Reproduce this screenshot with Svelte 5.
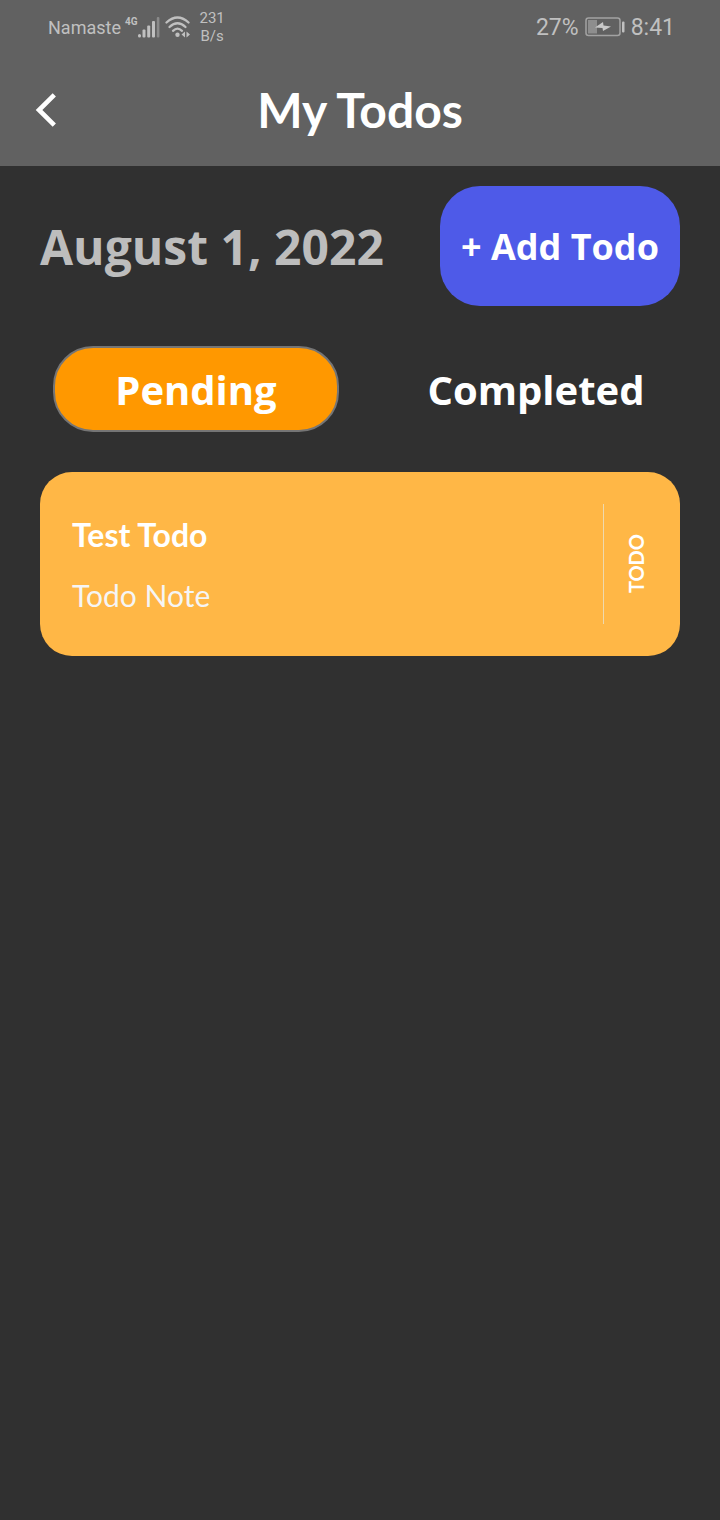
<script>
  let tab = $state('pending');
  const date = 'August 1, 2022';
  const todos = [
    { title: 'Test Todo', note: 'Todo Note', state: 'TODO', done: false }
  ];
  let visible = $derived(todos.filter((t) => t.done === (tab === 'completed')));
</script>

<div class="screen">
  <header>
    <div class="status">
      <div class="group">
        <span class="carrier">Namaste</span>
        <span class="net">4G</span>
        <svg class="signal" width="22" height="22" viewBox="0 0 22 22" aria-hidden="true">
          <g fill="#c0c0c0">
            <rect x="0" y="18" width="3" height="3.500" rx="1.500" />
            <rect x="4.500" y="13.500" width="3" height="8" rx="1" />
            <rect x="9.200" y="9.500" width="3" height="12" rx="1" />
            <rect x="14" y="5" width="3" height="16.500" rx="1" />
          </g>
          <rect x="18.800" y="1" width="2.600" height="20.500" rx="1" fill="#8a8a8a" />
        </svg>
        <svg class="wifi" width="26" height="22" viewBox="0 0 26 22" aria-hidden="true">
          <g fill="none" stroke="#c0c0c0" stroke-width="2.300" stroke-linecap="round">
            <path d="M1.500 6.500Q12.500-3.500 23.500 6.500" />
            <path d="M4.500 11Q12.500 3.500 20.500 11" />
            <path d="M8 14.800Q12.500 10.500 17 14.800" />
          </g>
          <circle cx="12.500" cy="18.800" r="2.200" fill="#c0c0c0" />
          <path d="M20 15.500V21.500L16.500 18.500ZM21.500 15.500V21.500L25 18.500Z" fill="#c0c0c0" />
        </svg>
        <span class="speed">231<br />B/s</span>
      </div>
      <div class="group right">
        <span>27%</span>
        <svg width="40" height="20" viewBox="0 0 40 20" aria-hidden="true">
          <rect x="1" y="1" width="34" height="17.500" rx="2.500" fill="none" stroke="#a2a2a2" stroke-width="1.500" />
          <rect x="3" y="3" width="9" height="13.500" fill="#8e8e8e" />
          <path d="M10 10.500L18 5L18.500 8.500L26 9.500L18 14L17.500 11Z" fill="#c8c8c8" />
          <rect x="37" y="4.500" width="2.500" height="11" rx="1" fill="#c0c0c0" />
        </svg>
        <span>8:41</span>
      </div>
    </div>
    <div class="bar">
      <button class="back" aria-label="Back">
        <svg width="22" height="36" viewBox="0 0 22 36" aria-hidden="true">
          <path d="M19.300 2.800L4 18L19.300 33.200" fill="none" stroke="#fff" stroke-width="4.600" />
        </svg>
      </button>
      <h1>My Todos</h1>
    </div>
  </header>

  <main>
    <div class="top">
      <h2>{date}</h2>
      <button class="add">+ Add Todo</button>
    </div>

    <div class="tabs">
      <button class:active={tab === 'pending'} onclick={() => (tab = 'pending')}>Pending</button>
      <button class:active={tab === 'completed'} onclick={() => (tab = 'completed')}>Completed</button>
    </div>

    <div class="list">
      {#each visible as todo}
        <article>
          <div class="body">
            <h3>{todo.title}</h3>
            <p>{todo.note}</p>
          </div>
          <div class="state"><span>{todo.state}</span></div>
        </article>
      {/each}
    </div>
  </main>
</div>

<style>
  :global(body) {
    background: #303030;
  }
  .screen {
    min-height: 100vh;
    background: #303030;
    color: #fff;
    font-family: Lato, sans-serif;
  }
  button {
    border: 0;
    padding: 0;
    background: none;
    color: inherit;
    cursor: pointer;
  }
  h1, h2, h3, p {
    margin: 0;
  }
  header {
    background: #616161;
  }
  .status {
    display: flex;
    justify-content: space-between;
    height: 54px;
    padding: 0 45px 0 48px;
    font-family: Roboto, sans-serif;
    color: #c0c0c0;
  }
  .group {
    display: flex;
    align-items: center;
  }
  .carrier {
    font-size: 18px;
  }
  .net {
    margin: 0 0 12px 4px;
    font-family: Roboto, sans-serif;
    font-size: 10px;
    font-weight: 700;
  }
  .wifi {
    margin: 0 9px 0 5px;
  }
  .speed {
    font-size: 15px;
    line-height: 18px;
    text-align: center;
  }
  .right {
    gap: 6px;
    font-size: 23px;
  }
  .bar {
    display: grid;
    grid-template-columns: 92px 1fr 92px;
    align-items: center;
    height: 112px;
  }
  .back {
    display: flex;
    padding-left: 35px;
  }
  h1 {
    font-size: 48px;
    line-height: 58px;
    font-weight: 700;
    text-align: center;
  }
  .top {
    display: flex;
    align-items: center;
    justify-content: space-between;
    padding: 20px 40px;
  }
  h2 {
    font-family: "Open Sans", sans-serif;
    font-size: 48px;
    font-weight: 700;
    color: #bdbdbd;
  }
  .add {
    width: 240px;
    height: 120px;
    border-radius: 40px;
    background: #4e5ae8;
    font-family: "Open Sans", sans-serif;
    font-size: 36px;
    font-weight: 700;
  }
  .tabs {
    display: grid;
    grid-template-columns: 1fr 1fr;
    gap: 54px;
    padding: 20px 41px 20px 53px;
  }
  .tabs button {
    height: 86px;
    border: 2px solid transparent;
    border-radius: 40px;
    font-family: "Open Sans", sans-serif;
    font-size: 40px;
    font-weight: 700;
  }
  .tabs .active {
    border-color: #757575;
    background: #ff9800;
  }
  .list {
    padding: 20px 40px;
  }
  article {
    display: flex;
    padding: 32px 0;
    border-radius: 32px;
    background: #ffb746;
  }
  .body {
    flex: 1;
    padding: 12px 32px;
  }
  h3 {
    font-size: 32px;
    line-height: 38px;
    font-weight: 700;
  }
  p {
    margin-top: 22px;
    font-size: 30px;
    line-height: 38px;
    color: #f5f5f5;
  }
  .body {
    padding-bottom: 10px;
  }
  .state {
    display: flex;
    align-items: center;
    width: 76px;
    border-left: 1px solid #eed9ae;
  }
  .state span {
    writing-mode: vertical-rl;
    transform: rotate(180deg);
    margin-left: 20px;
    font-size: 20px;
    line-height: 24px;
    font-weight: 700;
  }
</style>
